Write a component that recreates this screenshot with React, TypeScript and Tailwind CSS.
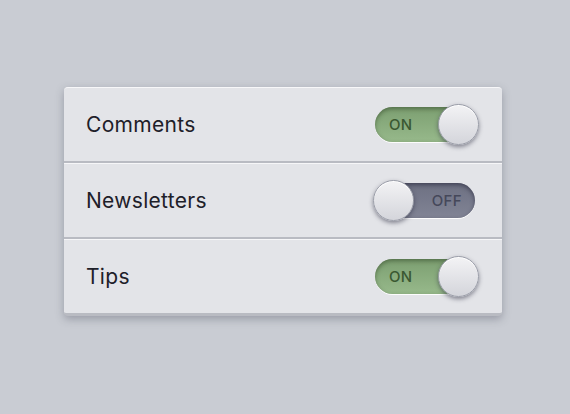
import { useState } from "react";

type Row = { id: string; label: string; on: boolean };

const initialRows: Row[] = [
  { id: "comments", label: "Comments", on: true },
  { id: "newsletters", label: "Newsletters", on: false },
  { id: "tips", label: "Tips", on: true },
];

function Toggle({ on, onClick }: { on: boolean; onClick: () => void }) {
  return (
    <button
      onClick={onClick}
      className={
        on
          ? "relative w-[98px] h-[35px] rounded-full bg-gradient-to-b from-[#7c9f71] to-[#97b98b] shadow-[inset_0_2px_4px_rgba(40,60,30,0.5),0_1px_0_rgba(255,255,255,0.9)]"
          : "relative w-[100px] h-[35px] rounded-full bg-gradient-to-b from-[#6d7082] to-[#818495] shadow-[inset_0_2px_4px_rgba(30,30,50,0.55),0_1px_0_rgba(255,255,255,0.9)]"
      }
    >
      <span
        className={
          on
            ? "absolute left-[14px] top-1/2 -translate-y-1/2 text-[15px] font-medium tracking-wide text-[#3a5832]"
            : "absolute right-[13px] top-1/2 -translate-y-1/2 text-[15px] font-medium tracking-wide text-[#45485a]"
        }
      >
        {on ? "ON" : "OFF"}
      </span>
      <span
        className={
          on
            ? "absolute -right-[6px] -top-[3px] w-[41px] h-[41px] rounded-full bg-gradient-to-b from-[#f3f3f5] to-[#d4d5db] border border-[#9a9da8] shadow-[0_2px_4px_rgba(40,40,60,0.5),inset_0_1px_0_#ffffff]"
            : "absolute -left-[2px] -top-[3px] w-[41px] h-[41px] rounded-full bg-gradient-to-b from-[#f3f3f5] to-[#d4d5db] border border-[#9a9da8] shadow-[0_2px_4px_rgba(40,40,60,0.5),inset_0_1px_0_#ffffff]"
        }
      />
    </button>
  );
}

export default function App() {
  const [rows, setRows] = useState<Row[]>(initialRows);

  function flip(id: string) {
    setRows((prev) => prev.map((r) => (r.id === id ? { ...r, on: !r.on } : r)));
  }

  return (
    <div
      className="w-[570px] h-[414px] bg-[#c9ccd3] pt-[87px] pl-[64px]"
      style={{ fontFamily: "Inter, 'Open Sans', sans-serif" }}
    >
      <div className="w-[438px] rounded-[4px] bg-[#e3e4e8] border-t border-[#f7f7f9] border-b-[3px] border-b-[#b9bbc2] shadow-[0_3px_8px_rgba(60,64,80,0.35)] overflow-hidden">
        {rows.map((row, i) => (
          <div
            key={row.id}
            className={
              i === 0
                ? "h-[75px] flex items-center justify-between pl-[22px] pr-[29px] border-b-2 border-[#b9bbc2]"
                : i === rows.length - 1
                ? "h-[74px] flex items-center justify-between pl-[22px] pr-[29px] border-t border-[#f6f6f8]"
                : "h-[76px] flex items-center justify-between pl-[22px] pr-[27px] border-t border-[#f6f6f8] border-b-2 border-b-[#b9bbc2]"
            }
          >
            <span className="text-[21px] tracking-[0.3px] text-[#1e2029]">{row.label}</span>
            <Toggle on={row.on} onClick={() => flip(row.id)} />
          </div>
        ))}
      </div>
    </div>
  );
}
